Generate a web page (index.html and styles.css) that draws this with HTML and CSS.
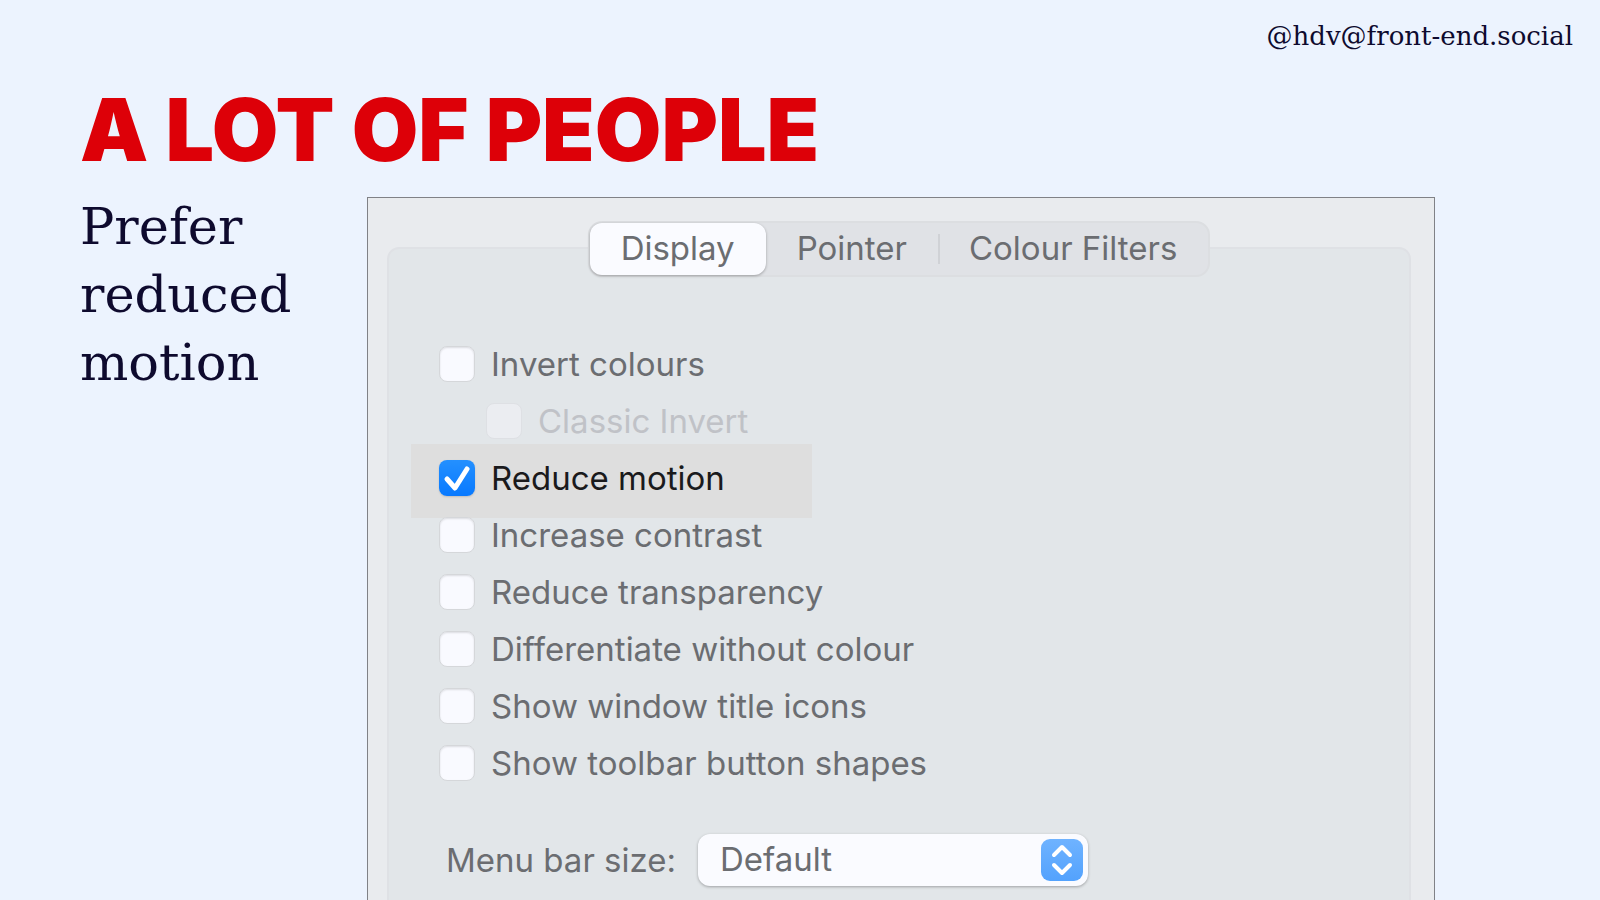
FILE: index.html
```
<!DOCTYPE html>
<html lang="en">
<head>
  <meta charset="UTF-8">
  <meta name="viewport" content="width=device-width, initial-scale=1">
  <title>A lot of people prefer reduced motion</title>
  <link rel="stylesheet" href="styles.css">
</head>
<body>

  <main class="slide">
    <p class="handle">@hdv@front-end.social</p>
    <h1>A LOT OF PEOPLE</h1>

    <div class="content">
      <p class="message">Prefer reduced motion</p>

      <section class="window">
        <div class="tabs">
          <button type="button" class="active">Display</button>
          <button type="button">Pointer</button>
          <button type="button">Colour Filters</button>
        </div>

        <div class="group">
          <div class="options">
            <label><input type="checkbox">Invert colours</label>
            <label class="nested"><input type="checkbox" disabled>Classic Invert</label>
            <label class="highlight"><input type="checkbox" checked>Reduce motion</label>
            <label><input type="checkbox">Increase contrast</label>
            <label><input type="checkbox">Reduce transparency</label>
            <label><input type="checkbox">Differentiate without colour</label>
            <label><input type="checkbox">Show window title icons</label>
            <label><input type="checkbox">Show toolbar button shapes</label>
          </div>

          <div class="menu-size">
            <label for="size">Menu bar size:</label>
            <div class="select">
              <select id="size">
                <option>Default</option>
                <option>Large</option>
              </select>
              <svg class="arrows" viewBox="0 0 42 42" aria-hidden="true">
                <path d="M13 16l8-8 8 8M13 26l8 8 8-8"/>
              </svg>
            </div>
          </div>
        </div>
      </section>
    </div>
  </main>

</body>
</html>
```
FILE: styles.css
```
* {
  box-sizing: border-box;
}

body {
  margin: 0;
  background: #ecf3fe;
  color: #0e0a2e;
  font-family: "DejaVu Serif", serif;
}

.slide {
  height: 100vh;
  overflow: hidden;
  padding: 16px 27px 0 80px;
}

.handle {
  margin: 0;
  text-align: right;
  font-size: 26px;
  line-height: 40px;
}

h1 {
  margin: 30px 0 18px;
  color: #dd0008;
  font-family: Inter, sans-serif;
  font-size: 86px;
  font-weight: 900;
  line-height: 89px;
}

.content {
  display: grid;
  grid-template-columns: 287px 1fr;
  padding-right: 138px;
}

.message {
  margin: 0;
  padding-right: 60px;
  font-size: 51px;
  line-height: 68px;
}

/* settings window */
.window {
  margin-top: 4px;
  padding: 23px 23px 0 19px;
  min-height: 760px;
  background: #e9ebee;
  border: 1px solid #808186;
  color: #6b6d71;
  font-family: Inter, sans-serif;
  font-size: 33px;
}

.tabs {
  position: relative;
  z-index: 1;
  display: flex;
  width: fit-content;
  height: 56px;
  margin: 0 auto;
  background: #e0e2e6;
  border: 2px solid #dcdee1;
  border-radius: 14px;
}

button {
  padding: 0 31px 2px;
  border: none;
  background: none;
  color: inherit;
  font: inherit;
}

button:last-child {
  background: linear-gradient(#d0d2d6, #d0d2d6) left center / 2px 30px no-repeat;
}

button.active {
  background: #fafbff;
  border-radius: 12px;
  box-shadow: 0 1px 3px rgba(0, 0, 0, 0.3);
}

.group {
  min-height: 700px;
  margin-top: -30px;
  padding: 86px 50px 0;
  background: #e2e6e9;
  border: 2px solid #dfe1e5;
  border-radius: 12px;
}

.options {
  display: flex;
  flex-direction: column;
  align-items: flex-start;
}

.options label {
  display: flex;
  align-items: center;
  gap: 16px;
  height: 57px;
}

.options .nested {
  margin-left: 47px;
  color: #c0c2c7;
}

.options .highlight {
  height: 74px;
  min-width: 401px;
  margin: -5px 0 -12px -28px;
  padding: 0 28px 7px;
  background: #dedede;
  color: #1a1a1c;
}

input {
  appearance: none;
  width: 36px;
  height: 36px;
  margin: 0;
  background: #f9faff;
  border: 1px solid #d5d7da;
  border-radius: 8px;
  box-shadow: inset 0 1px 2px rgba(0, 0, 0, 0.12);
}

input:disabled {
  background: #ebedf1;
  border-color: #dee0e4;
  box-shadow: none;
}

input:checked {
  border: none;
  background: url("data:image/svg+xml,%3Csvg xmlns='http://www.w3.org/2000/svg' viewBox='0 0 36 36'%3E%3Cpath d='M8 19l8 9L28 9' fill='none' stroke='white' stroke-width='5' stroke-linecap='round' stroke-linejoin='round'/%3E%3C/svg%3E"), linear-gradient(#2490ff, #0879ff);
  box-shadow: 0 1px 2px rgba(0, 0, 0, 0.15);
}

.menu-size {
  display: flex;
  align-items: center;
  gap: 22px;
  margin-top: 43px;
  padding-left: 7px;
}

.select {
  position: relative;
  width: 390px;
}

select {
  appearance: none;
  display: block;
  width: 100%;
  height: 52px;
  padding: 0 22px 2px;
  border: none;
  border-radius: 12px;
  background: #fafbff;
  box-shadow: 0 1px 3px rgba(0, 0, 0, 0.3);
  color: inherit;
  font: inherit;
}

/* blue stepper on top of the select */
.arrows {
  position: absolute;
  top: 5px;
  right: 5px;
  width: 42px;
  height: 42px;
  border-radius: 9px;
  background: linear-gradient(#6fb3ff, #53a2fd);
  fill: none;
  stroke: #fff;
  stroke-width: 4;
  stroke-linecap: round;
  stroke-linejoin: round;
  pointer-events: none;
}
```
